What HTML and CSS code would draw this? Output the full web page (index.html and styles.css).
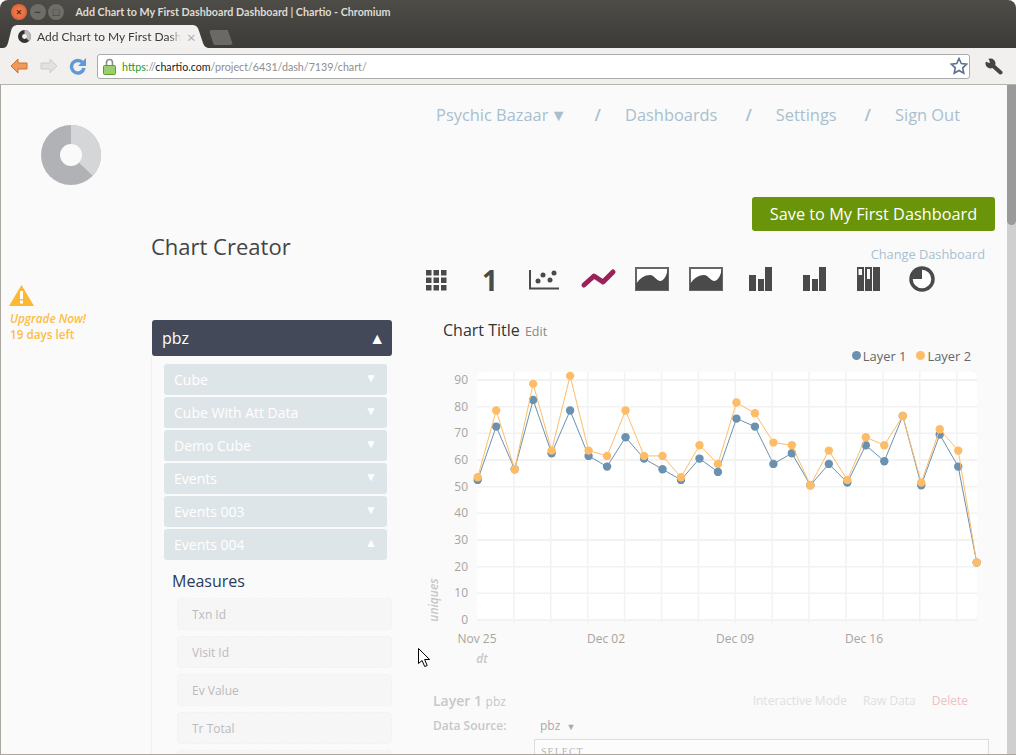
FILE: index.html
```html
<!DOCTYPE html>
<html lang="en">

<head>
    <meta charset="UTF-8">
    <title>Add Chart to My First Dashboard Dashboard | Chartio</title>
    <link rel="stylesheet" href="styles.css">
</head>

<body>
    <div class="titlebar">
        <span class="win-btn win-close">&times;</span>
        <span class="win-btn win-min">&minus;</span>
        <span class="win-btn win-max">&#9633;</span>
        <span class="win-title">Add Chart to My First Dashboard Dashboard | Chartio - Chromium</span>
    </div>

    <div class="tabstrip">
        <div class="tab">
            <svg class="tab-icon" width="13" height="13" viewBox="0 0 13 13">
                <circle cx="6.5" cy="6.5" r="6.5" fill="#333"/>
                <path d="M6.5 0a6.5 6.5 0 0 1 4.6 11L6.5 6.5z" fill="#bbb"/>
                <circle cx="6.5" cy="6.5" r="2.4" fill="#f2f1ef"/>
            </svg>
            <span class="tab-title">Add Chart to My First Dash</span>
            <span class="tab-close">&times;</span>
        </div>
        <div class="new-tab"></div>
    </div>

    <div class="toolbar">
        <svg class="tool" width="20" height="18" viewBox="0 0 20 18">
            <path d="M9 2 2 9l7 7v-4h9V6H9z" fill="#ee9a5a" stroke="#d0702c" stroke-linejoin="round"/>
        </svg>
        <svg class="tool" width="20" height="18" viewBox="0 0 20 18">
            <path d="m11 2 7 7-7 7v-4H2V6h9z" fill="#e2e1de" stroke="#cfcecb" stroke-linejoin="round"/>
        </svg>
        <svg class="tool" width="18" height="18" viewBox="0 0 18 18">
            <path d="M13.500 5.500A6.300 6.300 0 1 0 15 11" fill="none" stroke="#5f99d8" stroke-width="3.500"/>
            <path d="M17 1v8H9z" fill="#5f99d8"/>
        </svg>
        <div class="omnibox">
            <svg width="13" height="17" viewBox="0 0 13 17">
                <path d="M3.5 8V4.5a3 3 0 0 1 6 0V8" fill="none" stroke="#8d8d8d" stroke-width="1.6"/>
                <rect x=".5" y="7.5" width="12" height="9" rx="1" fill="#9ccf6a" stroke="#5c9a34"/>
            </svg>
            <span class="url"><span class="url-https">https</span><span class="url-rest">://</span><span class="url-host">chartio.com</span><span class="url-rest">/project/6431/dash/7139/chart/</span></span>
            <svg class="star" width="18" height="18" viewBox="0 0 18 18">
                <path d="m9 1.5 2.3 5 5.4.6-4 3.7 1.1 5.4L9 13.500l-4.800 2.700 1.100-5.400-4-3.700 5.400-.6z" fill="#fff" stroke="#5d6f91" stroke-width="1.600"/>
            </svg>
        </div>
        <svg class="wrench" width="18" height="17" viewBox="0 0 18 17">
            <circle cx="5.500" cy="5.500" r="5" fill="#444"/>
            <path d="M5.500 5.500-.5 3 3-.5z" fill="#f1f0ee"/>
            <path d="M6 6 15.500 14.500" stroke="#444" stroke-width="4" stroke-linecap="round"/>
        </svg>
    </div>

    <div class="viewport">
        <div class="page">
            <aside class="sidebar">
                <svg class="logo" width="60" height="60" viewBox="0 0 60 60">
                    <circle cx="30" cy="30" r="30" fill="#b1b2b6"/>
                    <path d="M30 30V0a30 30 0 0 1 21.600 50.800z" fill="#d5d6d8"/>
                    <circle cx="30" cy="30" r="11" fill="#fafafa"/>
                </svg>
                <div class="upgrade">
                    <svg width="25" height="21" viewBox="0 0 25 21">
                        <path d="M12.500 0 25 21H0z" fill="#fdb933"/>
                        <rect x="11" y="6" width="3" height="8" fill="#fff"/>
                        <rect x="11" y="15.500" width="3" height="3" fill="#fff"/>
                    </svg>
                    <div class="upgrade-now">Upgrade Now!</div>
                    <div>19 days left</div>
                </div>
            </aside>

            <main class="main">
                <nav class="topnav">
                    <a>Psychic Bazaar<span class="nav-arrow">&#9660;</span></a>
                    <span class="nav-sep">/</span>
                    <a>Dashboards</a>
                    <span class="nav-sep">/</span>
                    <a>Settings</a>
                    <span class="nav-sep">/</span>
                    <a>Sign Out</a>
                </nav>

                <div class="save-row">
                    <button class="save-btn">Save to My First Dashboard</button>
                </div>

                <div class="columns">
                    <section class="builder">
                        <h1>Chart Creator</h1>
                        <div class="source-head">pbz <span class="arrow">&#9650;</span></div>
                        <div class="source-body">
                            <div class="cube">Cube <span class="cube-arrow">&#9660;</span></div>
                            <div class="cube">Cube With Att Data <span class="cube-arrow">&#9660;</span></div>
                            <div class="cube">Demo Cube <span class="cube-arrow">&#9660;</span></div>
                            <div class="cube">Events <span class="cube-arrow">&#9660;</span></div>
                            <div class="cube">Events 003 <span class="cube-arrow">&#9660;</span></div>
                            <div class="cube">Events 004 <span class="cube-arrow">&#9650;</span></div>
                            <h2>Measures</h2>
                            <div class="measure">Txn Id</div>
                            <div class="measure">Visit Id</div>
                            <div class="measure">Ev Value</div>
                            <div class="measure">Tr Total</div>
                            <div class="measure"></div>
                        </div>
                    </section>

                    <section class="workspace">
                        <a class="change-link">Change Dashboard</a>
                        <div class="chart-types">
                            <span class="type">
                                <svg width="21" height="21" viewBox="0 0 21 21" fill="#4a4a4a">
                                    <rect width="5.500" height="5.500"/><rect x="7.500" width="5.500" height="5.500"/><rect x="15" width="5.500" height="5.500"/>
                                    <rect y="7.500" width="5.500" height="5.500"/><rect x="7.500" y="7.500" width="5.500" height="5.500"/><rect x="15" y="7.500" width="5.500" height="5.500"/>
                                    <rect y="15" width="5.500" height="5.500"/><rect x="7.500" y="15" width="5.500" height="5.500"/><rect x="15" y="15" width="5.500" height="5.500"/>
                                </svg>
                            </span>
                            <span class="type type-one">1</span>
                            <span class="type">
                                <svg width="30" height="20" viewBox="0 0 30 20" fill="#4a4a4a">
                                    <path d="M1 0v18.500h29" fill="none" stroke="#4a4a4a" stroke-width="2"/>
                                    <circle cx="9" cy="11" r="2.500"/><circle cx="14" cy="5" r="2.500"/><circle cx="21" cy="10" r="2.500"/><circle cx="25" cy="3" r="2.500"/>
                                </svg>
                            </span>
                            <span class="type">
                                <svg width="32" height="24" viewBox="0 0 32 24">
                                    <path d="M2 17 12 8l9 6L31 4" fill="none" stroke="#9b2159" stroke-width="5" stroke-linecap="round" stroke-linejoin="round"/>
                                </svg>
                            </span>
                            <span class="type type-tall">
                                <svg width="34" height="24" viewBox="0 0 34 24">
                                    <rect x="1" y="1" width="32" height="22" fill="#fff" stroke="#666" stroke-width="2"/>
                                    <path d="M1 17C5 11 10 8 15 8c4 0 6 5 10 6 4 0 7-6 8-13v22H1z" fill="#4a4a4a"/>
                                </svg>
                            </span>
                            <span class="type type-tall">
                                <svg width="34" height="24" viewBox="0 0 34 24">
                                    <rect x="1" y="1" width="32" height="22" fill="#fff" stroke="#666" stroke-width="2"/>
                                    <path d="M1 17C5 11 10 8 15 8c4 0 6 5 10 6 4 0 7-6 8-13v22H1z" fill="#4a4a4a"/>
                                </svg>
                            </span>
                            <span class="type type-tall">
                                <svg width="23" height="24" viewBox="0 0 23 24" fill="#4a4a4a">
                                    <rect y="8" width="7" height="16"/><rect x="9" y="12" width="6" height="12"/><rect x="16" width="7" height="24"/>
                                </svg>
                            </span>
                            <span class="type type-tall">
                                <svg width="23" height="24" viewBox="0 0 23 24" fill="#4a4a4a">
                                    <rect y="8" width="7" height="16"/><rect x="9" y="12" width="6" height="12"/><rect x="16" width="7" height="24"/>
                                </svg>
                            </span>
                            <span class="type type-tall">
                                <svg width="23" height="24" viewBox="0 0 23 24" fill="#4a4a4a">
                                    <path d="M0 0h7v24H0zM1.500 2v6h3.500V2zM8 0h7v24H8zM10 2v10h3V2zM16 0h7v24h-7z" fill-rule="evenodd"/>
                                </svg>
                            </span>
                            <span class="type type-tall">
                                <svg width="26" height="26" viewBox="0 0 26 26">
                                    <circle cx="13" cy="13" r="11" fill="#fff" stroke="#4a4a4a" stroke-width="3.500"/>
                                    <path d="M13 13V2A11 11 0 0 0 2 13z" fill="#4a4a4a"/>
                                </svg>
                            </span>
                        </div>

                        <div class="chart-head">Chart Title <a class="edit">Edit</a></div>
                        <div class="legend">
                            <span class="dot dot-blue"></span>Layer 1
                            <span class="dot dot-orange"></span>Layer 2
                        </div>

                        <svg id="chart" class="chart" width="575" height="300"></svg>

                        <div class="layer-head">
                            <div class="layer-name">Layer 1 <span>pbz</span></div>
                            <div class="layer-links">
                                <a>Interactive Mode</a>
                                <a>Raw Data</a>
                                <a class="delete">Delete</a>
                            </div>
                        </div>
                        <div class="data-source">
                            <label>Data Source:</label>
                            <span class="source-select">pbz <span>&#9660;</span></span>
                        </div>
                        <div class="query-box">SELECT</div>
                    </section>
                </div>
            </main>

            <svg class="cursor" width="13" height="20" viewBox="0 0 13 20">
                <path d="M.5.500v15l3.600-3 2.600 6 2.500-1-2.600-6h5z" fill="#fff" stroke="#000"/>
            </svg>
        </div>
        <div class="scrollbar"><div class="scroll-thumb"></div></div>
    </div>

    <script src="chart.js"></script>
</body>

</html>
```

FILE: styles.css
```css
html, body {
    margin: 0;
    height: 755px;
    overflow: hidden;
    background: #fff;
}

body {
    font-family: "Open Sans", sans-serif;
    display: flex;
    flex-direction: column;
}

/* window frame */
.titlebar {
    height: 25px;
    display: flex;
    align-items: center;
    padding-left: 11px;
    padding-bottom: 2px;
    box-sizing: border-box;
    background: linear-gradient(#4e4c47, #45433f);
    border-radius: 8px 8px 0 0;
}

.win-btn {
    width: 16px;
    height: 16px;
    margin-right: 2.500px;
    border-radius: 50%;
    background: #6f6d67;
    color: #3d3c38;
    font-size: 11px;
    line-height: 15px;
    text-align: center;
    font-weight: 700;
}

.win-close {
    background: radial-gradient(#f08a5a, #d9532a);
    color: #6b2410;
}

.win-title {
    margin-left: 9px;
    color: #dfdbd2;
    font-family: Lato, sans-serif;
    font-size: 10.730px;
    font-weight: 700;
    white-space: nowrap;
}

.tabstrip {
    height: 23px;
    display: flex;
    align-items: flex-end;
    padding-left: 2px;
    background: linear-gradient(#45433f, #3c3b37);
}

.tab {
    width: 208px;
    height: 23px;
    display: flex;
    align-items: center;
    padding: 0 0 0 16px;
    box-sizing: border-box;
    background: #f2f1ef;
    clip-path: path("M0 23C4 23 5 21 6 18L9 6C10 2 12 0 16 0H190C194 0 196 2 197 6L201 18C202 21 204 23 208 23Z");
}

.tab-icon {
    flex: none;
}

.tab-title {
    width: 144px;
    margin: 0 0 1px 6px;
    overflow: hidden;
    white-space: nowrap;
    font-family: Lato, sans-serif;
    font-size: 12px;
    color: #3c3b37;
    -webkit-mask-image: linear-gradient(to right, #000 92%, transparent);
    mask-image: linear-gradient(to right, #000 92%, transparent);
}

.tab-close {
    margin-left: 6px;
    font-size: 15px;
    color: #aaa;
}

.new-tab {
    width: 24px;
    height: 15px;
    margin-left: -1px;
    margin-bottom: 3px;
    background: #6b6965;
    clip-path: polygon(0 0, 78% 0, 100% 100%, 20% 100%);
    border-radius: 3px;
}

.toolbar {
    height: 37px;
    display: flex;
    align-items: center;
    background: #f1f0ee;
    border-bottom: 1px solid #b5b3ad;
    box-sizing: border-box;
    padding-left: 9px;
}

.tool {
    flex: none;
    margin-right: 10px;
}

.omnibox {
    flex: none;
    width: 873px;
    height: 25px;
    display: flex;
    align-items: center;
    padding: 0 1px 0 5px;
    box-sizing: border-box;
    background: #fff;
    border: 1px solid #aaa;
    border-radius: 3px;
}

.url {
    margin-left: 6px;
    font-family: Lato, sans-serif;
    font-size: 10.700px;
    flex: 1;
}

.url-https { color: #1e9a1a; }
.url-host { color: #222; }
.url-rest { color: #8e8e8e; }

.wrench {
    flex: none;
    margin-left: 15px;
}

/* page */
.viewport {
    flex: 1;
    min-height: 0;
    display: flex;
    background: #fafafa;
    border-left: 1px solid #a8a69f;
    border-bottom: 1px solid #a8a69f;
}

.page {
    position: relative;
    flex: 1;
    min-width: 0;
    display: flex;
    overflow: hidden;
    color: #444;
}

.sidebar {
    flex: none;
    width: 150px;
    padding-top: 40px;
    box-sizing: border-box;
}

.logo {
    display: block;
    margin-left: 40px;
}

.upgrade {
    margin: 100px 0 0 9px;
    font-size: 11.700px;
    font-weight: 600;
    line-height: 16px;
    color: #fdbd4a;
}

.upgrade svg {
    display: block;
    margin: 0 0 4px -1px;
}

.upgrade-now {
    font-style: italic;
}

.main {
    flex: 1;
    min-width: 0;
}

.topnav {
    height: 58px;
    display: flex;
    align-items: center;
    justify-content: flex-end;
    gap: 24px;
    padding-right: 47px;
    font-size: 16.400px;
    color: #a8bfcf;
}

.nav-sep {
    margin-left: 4px;
    font-weight: 600;
}

.nav-arrow {
    margin-left: 2px;
}

.save-row {
    display: flex;
    justify-content: flex-end;
    padding: 54px 12px 0 0;
}

.save-btn {
    width: 243px;
    height: 34px;
    border: none;
    border-radius: 3px;
    background: #6a9409;
    color: #fff;
    font-family: inherit;
    font-size: 16.300px;
}

.columns {
    display: flex;
}

.builder {
    flex: none;
    width: 241px;
}

h1 {
    margin: 0 0 59px;
    font-size: 22px;
    font-weight: 400;
    line-height: 30px;
    color: #444;
}

.source-head {
    height: 36px;
    margin-left: 1px;
    display: flex;
    align-items: center;
    justify-content: space-between;
    padding: 0 7px 0 10px;
    border-radius: 3px;
    background: #434958;
    color: #fff;
    font-size: 16px;
}

.arrow {
    font-size: 16px;
}

.source-body {
    padding: 8px 0 0 12px;
    border-left: 1px solid #f0f0f0;
}

.cube {
    width: 223px;
    height: 31px;
    margin-bottom: 2px;
    display: flex;
    align-items: center;
    justify-content: space-between;
    padding: 0 10px 0 10px;
    box-sizing: border-box;
    border-radius: 3px;
    background: #dee5e8;
    color: #fff;
    font-size: 14px;
}

.cube-arrow {
    font-size: 12px;
    margin-bottom: 4px;
}

h2 {
    margin: 9px 0 5px 8px;
    font-size: 16px;
    font-weight: 400;
    line-height: 24px;
    color: #2a3a5c;
}

.measure {
    width: 215px;
    height: 32px;
    margin: 0 0 6px 13px;
    padding-left: 14px;
    box-sizing: border-box;
    border: 1px dashed #f1f1f1;
    border-radius: 4px;
    background: #f6f6f6;
    color: #bbb;
    font-size: 12px;
    line-height: 32px;
}

.workspace {
    flex: 1;
    min-width: 0;
    margin-left: 33px;
}

.change-link {
    display: block;
    margin-right: 22px;
    text-align: right;
    font-size: 12.800px;
    line-height: 18px;
    padding-top: 14px;
    color: #a8bfcf;
}

.chart-types {
    display: flex;
    height: 30px;
    margin: 2px 0 0 -16px;
}

.type {
    width: 54px;
    display: flex;
    align-items: center;
    justify-content: center;
}

.type svg {
    overflow: visible;
}

.type-tall svg {
    margin-bottom: 2px;
}

.type-one {
    font-size: 28px;
    font-weight: 700;
    color: #4a4a4a;
}

.chart-head {
    margin: 23px 0 0 18px;
    font-size: 16px;
    line-height: 24px;
    color: #333;
}

.edit {
    margin-left: 1px;
    font-size: 12.500px;
    color: #888;
}

.legend {
    display: flex;
    align-items: center;
    justify-content: flex-end;
    margin-right: 36px;
    height: 20px;
    margin-top: 2px;
    font-size: 12.900px;
    color: #666;
}

.dot {
    width: 9px;
    height: 9px;
    border-radius: 50%;
    margin-left: 10px;
    margin-right: 2px;
    margin-bottom: 2px;
}

.dot-blue { background: #6a91b0; }
.dot-orange { background: #fdbd68; }

.chart {
    display: block;
    margin-top: 4px;
}

.chart text {
    font-family: "Open Sans", sans-serif;
    font-size: 12px;
    fill: #a8a4a0;
}

.chart .axis-name {
    font-style: italic;
    font-weight: 600;
    fill: #c8c8c8;
}

.layer-head {
    display: flex;
    justify-content: space-between;
    margin: 19px 39px 0 8px;
    height: 22px;
    align-items: center;
    font-size: 12px;
}

.layer-name {
    font-size: 14px;
    font-weight: 600;
    color: #c8c8c8;
}

.layer-name span {
    font-size: 12px;
    font-weight: 400;
}

.layer-links {
    display: flex;
    gap: 16px;
    color: #dfe0e2;
}

.delete {
    color: #f0c0c0;
}

.data-source {
    display: flex;
    align-items: center;
    height: 24px;
    margin: 2px 0 0 8px;
    font-size: 12px;
    font-weight: 600;
    color: #c8c8c8;
}

.data-source label {
    width: 107px;
}

.source-select {
    font-weight: 400;
    color: #aaa;
}

.source-select span {
    font-size: 9px;
    margin-left: 3px;
}

.query-box {
    margin: 2px 18px 0 109px;
    height: 40px;
    padding: 6px 6px 0;
    box-sizing: border-box;
    border: 1px solid #ddd;
    background: #fcfcfc;
    font-family: "Liberation Serif", serif;
    font-size: 10px;
    letter-spacing: 1px;
    color: #b5b5b5;
}

.cursor {
    position: absolute;
    left: 417px;
    top: 563px;
}

.scrollbar {
    flex: none;
    width: 9px;
    background: #cfcfcf;
}

.scroll-thumb {
    height: 140px;
    background: #9a9a9a;
    border-radius: 0 0 5px 5px;
}
```

FILE: chart.js
```js
const blue = [52, 72, 56, 82, 62, 78, 61, 57, 68, 60, 56, 52, 60, 55, 75, 72, 58, 62, 50, 58, 51, 65, 59, 76, 50, 69, 57, 21];
const orange = [53, 78, 56, 88, 63, 91, 63, 61, 78, 61, 61, 53, 65, 58, 81, 77, 66, 65, 50, 63, 52, 68, 65, 76, 51, 71, 63, 21];

const NS = 'http://www.w3.org/2000/svg';
const chart = document.getElementById('chart');

// plot area inside the svg
const left = 52, right = 552, top0 = 2, zero = 250;
const stepX = (right - 1 - left) / 27;
const unitY = 2.667;

function add(name, attrs, text) {
    const el = document.createElementNS(NS, name);
    for (const key in attrs) {
        el.setAttribute(key, attrs[key]);
    }
    if (text) el.textContent = text;
    chart.appendChild(el);
    return el;
}

add('rect', { x: left, y: top0, width: right - left, height: zero - top0, rx: 6, fill: '#fff' });

for (let v = 0; v <= 90; v += 10) {
    const y = zero - v * unitY;
    add('line', { x1: left, x2: right, y1: y, y2: y, stroke: '#f2f2f2', 'stroke-width': v % 30 === 0 ? 2 : 1.5 });
    add('text', { x: 43, y: y + 4, 'text-anchor': 'end' }, String(v));
}

for (let i = 1; i <= 13; i++) {
    const x = left + 36.9 * i;
    add('line', { x1: x, x2: x, y1: top0, y2: zero + 3, stroke: '#f2f2f2', 'stroke-width': 1.5 });
}

[['Nov 25', 52], ['Dec 02', 181], ['Dec 09', 310], ['Dec 16', 439]].forEach(([label, x]) => {
    add('text', { x: x, y: 273, 'text-anchor': 'middle' }, label);
});

add('text', { x: 57, y: 293, 'text-anchor': 'middle', class: 'axis-name' }, 'dt');
add('text', { transform: 'translate(13 230) rotate(-90)', 'text-anchor': 'middle', class: 'axis-name' }, 'uniques');

function drawLayer(values, color) {
    const points = values.map((v, i) => [left + 0.7 + i * stepX, zero - 1.4 - v * unitY]);
    add('polyline', { points: points.map((p) => p.join(',')).join(' '), fill: 'none', stroke: color, 'stroke-width': 1 });
    points.forEach((p) => {
        add('circle', { cx: p[0], cy: p[1], r: 4.2, fill: color });
    });
}

drawLayer(blue, '#6a91b0');
drawLayer(orange, '#fdbd68');
```
